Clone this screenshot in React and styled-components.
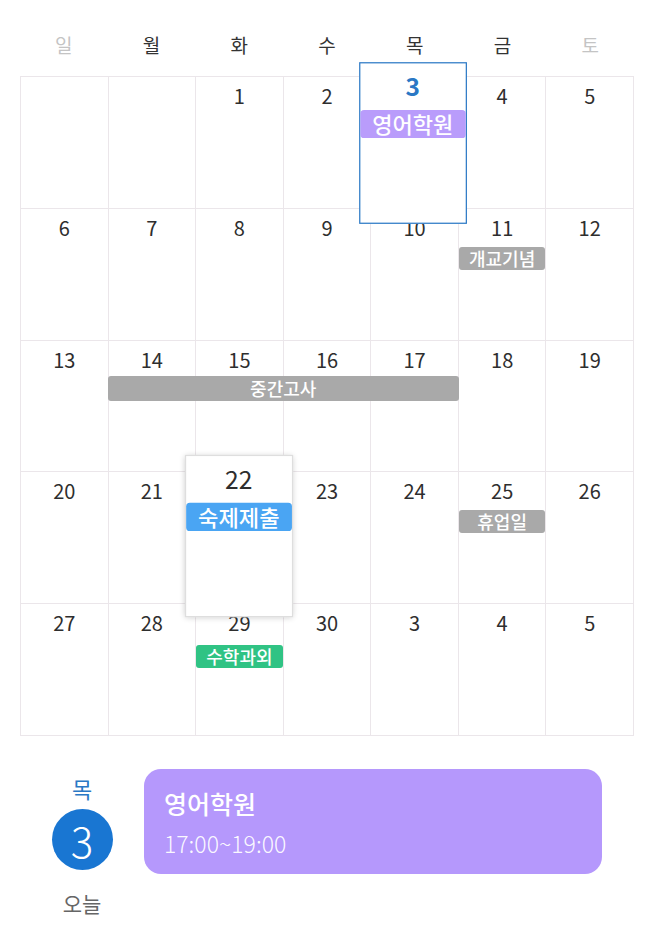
import React from 'react'
import styled, { createGlobalStyle, css } from 'styled-components'

const GlobalStyle = createGlobalStyle`
  body {
    margin: 0;
    background: #fff;
    font-family: 'Noto Sans CJK KR', 'Noto Sans', sans-serif;
  }
`

const Page = styled.div`
  width: 657px;
  padding: 0 23px 0 20px;
  box-sizing: border-box;
`

const WeekHeader = styled.div`
  display: grid;
  grid-template-columns: repeat(7, 1fr);
  height: 76px;
  padding-top: 12px;
  box-sizing: border-box;
  align-items: center;
`

const WeekLabel = styled.div`
  text-align: center;
  font-size: 19px;
  font-weight: 400;
  color: ${p => (p.$weekend ? '#c4c4c4' : '#333')};
`

const Grid = styled.div`
  display: grid;
  grid-template-columns: repeat(7, 1fr);
  grid-template-rows: repeat(5, 131.8px);
  border-top: 1px solid #ebe6ea;
  border-left: 1px solid #ebe6ea;
`

const popped = css`
  z-index: 3;
  border: 1px solid #dedede;
  box-shadow: 0 1px 5px rgba(0, 0, 0, 0.22);
  transform: translate(-1px, -2px) scale(1.23);
`

const selected = css`
  z-index: 3;
  border: 1.5px solid #2a78c5;
  transform: translateX(-2px) scale(1.225);
`

const Cell = styled.div`
  grid-row: ${p => p.$row};
  grid-column: ${p => p.$col};
  display: flex;
  flex-direction: column;
  background: #fff;
  border-right: 1px solid #ebe6ea;
  border-bottom: 1px solid #ebe6ea;
  position: relative;
  ${p => p.$popped && popped}
  ${p => p.$selected && selected}
`

const DayNum = styled.div`
  height: 38px;
  padding-top: 6px;
  box-sizing: border-box;
  text-align: center;
  font-size: 20px;
  line-height: 26px;
  color: ${p => (p.$selected ? '#2a78c5' : '#2e2e2e')};
  font-weight: ${p => (p.$selected ? 700 : 400)};
`

const colors = {
  grey: '#a9a9a9',
  purple: '#b99cfb',
  blue: '#4aa5f3',
  green: '#30c384',
}

const EventBar = styled.div`
  height: 23px;
  line-height: 23px;
  border-radius: 3px;
  text-align: center;
  font-size: 18px;
  font-weight: 500;
  color: #fff;
  white-space: nowrap;
  background: ${p => colors[p.$color]};
  ${p => p.$offset && `margin-top: ${p.$offset}px;`}
`

const SpanBar = styled(EventBar)`
  grid-row: ${p => p.$row};
  grid-column: ${p => p.$col};
  align-self: start;
  z-index: 1;
  height: 25px;
  line-height: 25px;
  margin: 35px 0 0 -1px;
`

const Agenda = styled.div`
  display: flex;
  margin-top: 33px;
`

const DateColumn = styled.div`
  width: 124px;
  flex-shrink: 0;
  display: flex;
  flex-direction: column;
  align-items: center;
  padding-top: 5px;
`

const DayName = styled.div`
  font-size: 22px;
  line-height: 28px;
  color: #2a78c5;
`

const TodayCircle = styled.div`
  width: 61px;
  height: 61px;
  margin-top: 7px;
  border-radius: 50%;
  background: #1976d2;
  color: #fff;
  display: flex;
  align-items: center;
  justify-content: center;
  font-size: 42px;
  font-weight: 300;
`

const TodayLabel = styled.div`
  margin-top: 19px;
  font-size: 21px;
  line-height: 28px;
  color: #666;
`

const AgendaCard = styled.div`
  width: 458px;
  height: 105px;
  box-sizing: border-box;
  padding: 18px 20px;
  border-radius: 17px;
  background: #b598fc;
  color: #fff;
`

const CardTitle = styled.div`
  font-size: 25px;
  font-weight: 500;
  line-height: 32px;
`

const CardTime = styled.div`
  margin-top: 9px;
  font-size: 23px;
  font-weight: 300;
  line-height: 30px;
  color: rgba(255, 255, 255, 0.95);
`

const weekdays = ['일', '월', '화', '수', '목', '금', '토']

const days = [
  '', '', 1, 2, 3, 4, 5,
  6, 7, 8, 9, 10, 11, 12,
  13, 14, 15, 16, 17, 18, 19,
  20, 21, 22, 23, 24, 25, 26,
  27, 28, 29, 30, 3, 4, 5,
]

const cellEvents = {
  4: { name: '영어학원', color: 'purple' },
  12: { name: '개교기념', color: 'grey' },
  23: { name: '숙제제출', color: 'blue' },
  26: { name: '휴업일', color: 'grey' },
  30: { name: '수학과외', color: 'green', offset: 3 },
}

const App = () => (
  <Page>
    <GlobalStyle />
    <WeekHeader>
      {weekdays.map((d, i) => (
        <WeekLabel key={d} $weekend={i === 0 || i === 6}>
          {d}
        </WeekLabel>
      ))}
    </WeekHeader>
    <Grid>
      {days.map((day, i) => {
        const ev = cellEvents[i]
        return (
          <Cell
            key={i}
            $row={Math.floor(i / 7) + 1}
            $col={(i % 7) + 1}
            $selected={i === 4}
            $popped={i === 23}
          >
            <DayNum $selected={i === 4}>{day}</DayNum>
            {ev && (
              <EventBar $color={ev.color} $offset={ev.offset}>
                {ev.name}
              </EventBar>
            )}
          </Cell>
        )
      })}
      <SpanBar $row={3} $col="2 / 6" $color="grey">
        중간고사
      </SpanBar>
    </Grid>
    <Agenda>
      <DateColumn>
        <DayName>목</DayName>
        <TodayCircle>3</TodayCircle>
        <TodayLabel>오늘</TodayLabel>
      </DateColumn>
      <AgendaCard>
        <CardTitle>영어학원</CardTitle>
        <CardTime>17:00~19:00</CardTime>
      </AgendaCard>
    </Agenda>
  </Page>
)

export default App
